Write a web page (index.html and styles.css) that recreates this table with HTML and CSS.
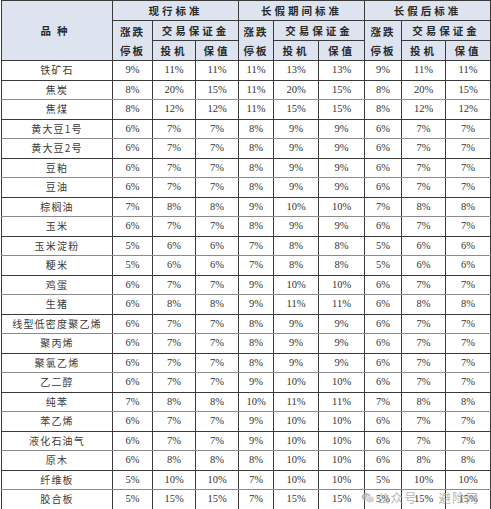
FILE: index.html
```html
<!DOCTYPE html>
<html lang="zh">
<head>
<meta charset="utf-8">
<link rel="stylesheet" href="styles.css">
</head>
<body>
<div class="wrap">
<table class="tbl">
<colgroup>
<col class="c-name"><col class="c1"><col class="c2"><col class="c3"><col class="c4"><col class="c5"><col class="c6"><col class="c7"><col class="c8"><col class="c9">
</colgroup>
<thead>
<tr class="h">
<th rowspan="3" class="hn">品种</th>
<th colspan="3">现行标准</th>
<th colspan="3">长假期间标准</th>
<th colspan="3">长假后标准</th>
</tr>
<tr class="h">
<th rowspan="2" class="lim">涨跌<br>停板</th>
<th colspan="2">交易保证金</th>
<th rowspan="2" class="lim">涨跌<br>停板</th>
<th colspan="2">交易保证金</th>
<th rowspan="2" class="lim">涨跌<br>停板</th>
<th colspan="2">交易保证金</th>
</tr>
<tr class="h">
<th>投机</th><th>保值</th>
<th>投机</th><th>保值</th>
<th>投机</th><th>保值</th>
</tr>
</thead>
<tbody>
<tr><td class="n">铁矿石</td><td>9%</td><td>11%</td><td>11%</td><td>11%</td><td>13%</td><td>13%</td><td>9%</td><td>11%</td><td>11%</td></tr>
<tr><td class="n">焦炭</td><td>8%</td><td>20%</td><td>15%</td><td>11%</td><td>20%</td><td>15%</td><td>8%</td><td>20%</td><td>15%</td></tr>
<tr><td class="n">焦煤</td><td>8%</td><td>12%</td><td>12%</td><td>11%</td><td>15%</td><td>15%</td><td>8%</td><td>12%</td><td>12%</td></tr>
<tr><td class="n">黄大豆1号</td><td>6%</td><td>7%</td><td>7%</td><td>8%</td><td>9%</td><td>9%</td><td>6%</td><td>7%</td><td>7%</td></tr>
<tr><td class="n">黄大豆2号</td><td>6%</td><td>7%</td><td>7%</td><td>8%</td><td>9%</td><td>9%</td><td>6%</td><td>7%</td><td>7%</td></tr>
<tr><td class="n">豆粕</td><td>6%</td><td>7%</td><td>7%</td><td>8%</td><td>9%</td><td>9%</td><td>6%</td><td>7%</td><td>7%</td></tr>
<tr><td class="n">豆油</td><td>6%</td><td>7%</td><td>7%</td><td>8%</td><td>9%</td><td>9%</td><td>6%</td><td>7%</td><td>7%</td></tr>
<tr><td class="n">棕榈油</td><td>7%</td><td>8%</td><td>8%</td><td>9%</td><td>10%</td><td>10%</td><td>7%</td><td>8%</td><td>8%</td></tr>
<tr><td class="n">玉米</td><td>6%</td><td>7%</td><td>7%</td><td>8%</td><td>9%</td><td>9%</td><td>6%</td><td>7%</td><td>7%</td></tr>
<tr><td class="n">玉米淀粉</td><td>5%</td><td>6%</td><td>6%</td><td>7%</td><td>8%</td><td>8%</td><td>5%</td><td>6%</td><td>6%</td></tr>
<tr><td class="n">粳米</td><td>5%</td><td>6%</td><td>6%</td><td>7%</td><td>8%</td><td>8%</td><td>5%</td><td>6%</td><td>6%</td></tr>
<tr><td class="n">鸡蛋</td><td>6%</td><td>7%</td><td>7%</td><td>9%</td><td>10%</td><td>10%</td><td>6%</td><td>7%</td><td>7%</td></tr>
<tr><td class="n">生猪</td><td>6%</td><td>8%</td><td>8%</td><td>9%</td><td>11%</td><td>11%</td><td>6%</td><td>8%</td><td>8%</td></tr>
<tr><td class="n">线型低密度聚乙烯</td><td>6%</td><td>7%</td><td>7%</td><td>8%</td><td>9%</td><td>9%</td><td>6%</td><td>7%</td><td>7%</td></tr>
<tr><td class="n">聚丙烯</td><td>6%</td><td>7%</td><td>7%</td><td>8%</td><td>9%</td><td>9%</td><td>6%</td><td>7%</td><td>7%</td></tr>
<tr><td class="n">聚氯乙烯</td><td>6%</td><td>7%</td><td>7%</td><td>8%</td><td>9%</td><td>9%</td><td>6%</td><td>7%</td><td>7%</td></tr>
<tr><td class="n">乙二醇</td><td>6%</td><td>7%</td><td>7%</td><td>9%</td><td>10%</td><td>10%</td><td>6%</td><td>7%</td><td>7%</td></tr>
<tr><td class="n">纯苯</td><td>7%</td><td>8%</td><td>8%</td><td>10%</td><td>11%</td><td>11%</td><td>7%</td><td>8%</td><td>8%</td></tr>
<tr><td class="n">苯乙烯</td><td>6%</td><td>7%</td><td>7%</td><td>9%</td><td>10%</td><td>10%</td><td>6%</td><td>7%</td><td>7%</td></tr>
<tr><td class="n">液化石油气</td><td>6%</td><td>7%</td><td>7%</td><td>9%</td><td>10%</td><td>10%</td><td>6%</td><td>7%</td><td>7%</td></tr>
<tr><td class="n">原木</td><td>6%</td><td>8%</td><td>8%</td><td>8%</td><td>10%</td><td>10%</td><td>6%</td><td>8%</td><td>8%</td></tr>
<tr><td class="n">纤维板</td><td>5%</td><td>10%</td><td>10%</td><td>7%</td><td>10%</td><td>10%</td><td>5%</td><td>10%</td><td>10%</td></tr>
<tr><td class="n">胶合板</td><td>5%</td><td>15%</td><td>15%</td><td>7%</td><td>15%</td><td>15%</td><td>5%</td><td>15%</td><td>15%</td></tr>
</tbody>
</table>
<div class="wm">
<svg class="wm-icon" viewBox="0 0 24 20" width="14" height="12">
<ellipse cx="9" cy="8" rx="8" ry="6.5" fill="#a9a9a9"/>
<ellipse cx="15.5" cy="12.5" rx="7" ry="5.6" fill="#c4c4c4" stroke="#fff" stroke-width="0.8"/>
<circle cx="6.3" cy="6.5" r="1" fill="#fff"/>
<circle cx="11.5" cy="6.5" r="1" fill="#fff"/>
<circle cx="13.3" cy="11.5" r="0.8" fill="#fff"/>
<circle cx="17.7" cy="11.5" r="0.8" fill="#fff"/>
</svg>
<span class="wm-text">公众号 · 避险网</span>
</div>
</div>
</body>
</html>
```
FILE: styles.css
```css
html, body {
  margin: 0;
  padding: 0;
  background: #ffffff;
}
.wrap {
  position: relative;
  width: 491px;
  height: 509px;
  padding: 0 0 0 1px;
  box-sizing: border-box;
}
.tbl {
  border-collapse: collapse;
  table-layout: fixed;
  width: 489px;
  font-family: "Liberation Serif", "Noto Sans CJK SC", serif;
  color: #333;
  border: 1.5px solid #555;
}
.c-name { width: 111px; }
.c1 { width: 40px; }
.c2 { width: 43px; }
.c3 { width: 43px; }
.c4 { width: 35px; }
.c5 { width: 45px; }
.c6 { width: 46px; }
.c7 { width: 37px; }
.c8 { width: 44px; }
.c9 { width: 45px; }
.tbl th, .tbl td {
  border: 1px solid #3a3a3a;
  padding: 0;
  text-align: center;
  vertical-align: middle;
}
.tbl th {
  background: #dde3ef;
  font-family: "Noto Sans CJK SC", sans-serif;
  font-size: 10.5px;
  font-weight: 700;
  color: #2a2a2a;
  letter-spacing: 3px;
  height: 19px;
  line-height: 12px;
}
.tbl th.hn {
  letter-spacing: 6px;
}
.tbl th.lim {
  letter-spacing: 2px;
  line-height: 19px;
}
.tbl td {
  height: 18.5px;
  font-size: 10.5px;
  line-height: 12px;
}
.tbl td.n {
  font-family: "Noto Sans CJK SC", sans-serif;
  font-size: 10px;
  letter-spacing: 1.2px;
  color: #3a3a3a;
}
.tbl tbody tr:nth-child(even) td {
  border-bottom-color: #8a8a8a;
}
.wm {
  position: absolute;
  left: 361px;
  top: 488px;
  display: flex;
  align-items: center;
  gap: 2px;
  opacity: 0.75;
}
.wm-text {
  font-family: "Noto Sans CJK SC", sans-serif;
  font-size: 12.5px;
  color: #a0a0a0;
  letter-spacing: 1px;
}
```
